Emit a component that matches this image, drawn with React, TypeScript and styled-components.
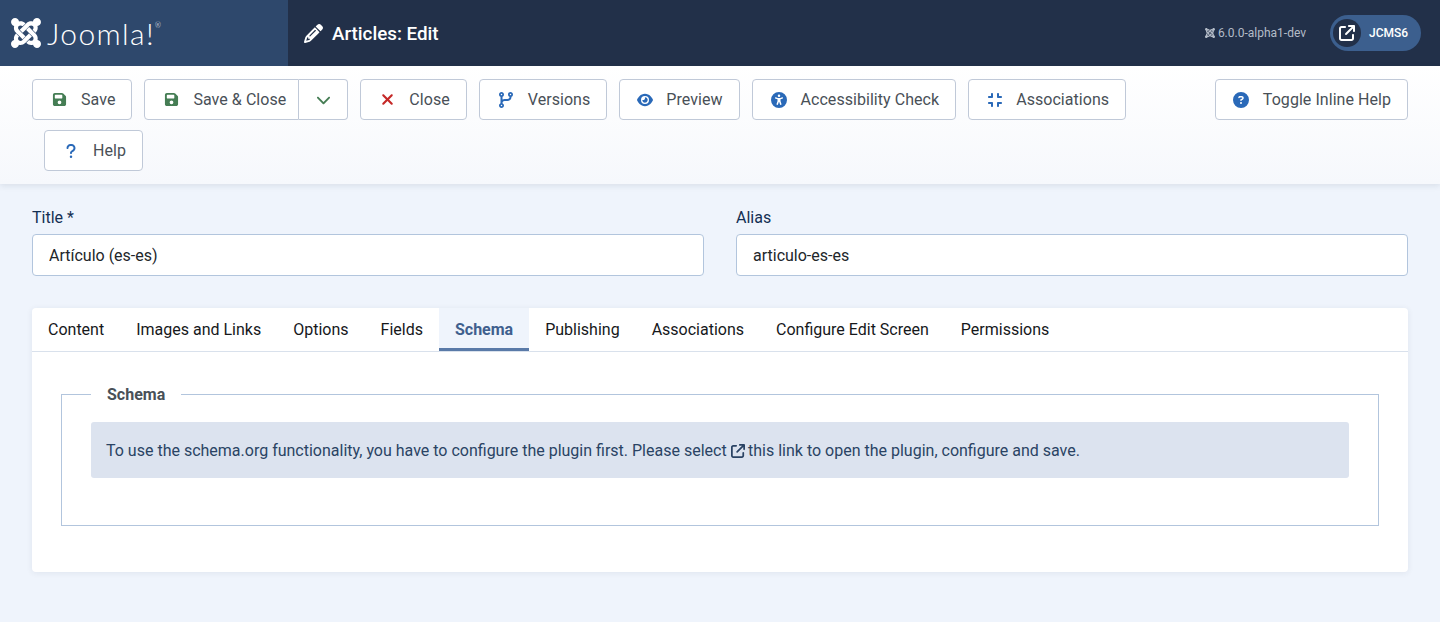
import { ReactNode } from "react";
import styled, { createGlobalStyle } from "styled-components";
import {
  FaArrowUpRightFromSquare,
  FaChevronDown,
  FaCircleQuestion,
  FaCodeBranch,
  FaCompress,
  FaEye,
  FaFloppyDisk,
  FaPencil,
  FaQuestion,
  FaUniversalAccess,
  FaXmark,
} from "react-icons/fa6";
import { SiJoomla } from "react-icons/si";

const tabs = [
  "Content",
  "Images and Links",
  "Options",
  "Fields",
  "Schema",
  "Publishing",
  "Associations",
  "Configure Edit Screen",
  "Permissions",
];

function ToolButton({ icon, color, label, slot = 22 }: { icon: ReactNode; color: string; label: string; slot?: number }) {
  return (
    <Button>
      <IconSlot $color={color} $width={slot}>{icon}</IconSlot>
      <span>{label}</span>
    </Button>
  );
}

export default function App() {
  return (
    <>
      <GlobalStyle />
      <Header>
        <LogoPanel>
          <SiJoomla size={30} color="#fff" />
          <LogoWord>
            Joomla!<LogoMark>®</LogoMark>
          </LogoWord>
        </LogoPanel>
        <PageHeading>
          <FaPencil size={19} color="#fff" />
          <span>Articles: Edit</span>
        </PageHeading>
        <HeaderEnd>
          <Version>
            <SiJoomla size={10} />
            <span>6.0.0-alpha1-dev</span>
          </Version>
          <SitePill>
            <SiteIcon>
              <FaArrowUpRightFromSquare size={16} />
            </SiteIcon>
            <span>JCMS6</span>
          </SitePill>
        </HeaderEnd>
      </Header>

      <Toolbar>
        <ToolButton icon={<FaFloppyDisk size={15} />} color="#457d54" label="Save" />
        <SplitGroup>
          <ToolButton icon={<FaFloppyDisk size={15} />} color="#457d54" label="Save & Close" />
          <CaretButton>
            <FaChevronDown size={15} />
          </CaretButton>
        </SplitGroup>
        <ToolButton icon={<FaXmark size={17} />} color="#c52827" label="Close" />
        <ToolButton icon={<FaCodeBranch size={16} />} color="#2a69b8" label="Versions" />
        <ToolButton icon={<FaEye size={16} />} color="#2a69b8" label="Preview" slot={20} />
        <ToolButton icon={<FaUniversalAccess size={16} />} color="#2a69b8" label="Accessibility Check" />
        <ToolButton icon={<FaCompress size={16} />} color="#2a69b8" label="Associations" slot={21} />
        <HelpToggle>
          <ToolButton icon={<FaCircleQuestion size={16} />} color="#2a69b8" label="Toggle Inline Help" slot={21} />
        </HelpToggle>
        <HelpSlot>
          <ToolButton icon={<FaQuestion size={16} />} color="#2a69b8" label="Help" />
        </HelpSlot>
      </Toolbar>

      <Main>
        <TitleRow>
          <Field>
            <FieldLabel>Title *</FieldLabel>
            <TextInput readOnly value="Artículo (es-es)" />
          </Field>
          <Field>
            <FieldLabel>Alias</FieldLabel>
            <TextInput readOnly value="articulo-es-es" />
          </Field>
        </TitleRow>

        <TabCard>
          <TabBar>
            {tabs.map(tab => (
              <Tab key={tab} $active={tab === "Schema"}>
                {tab}
              </Tab>
            ))}
          </TabBar>
          <SchemaFieldset>
            <SchemaLegend>Schema</SchemaLegend>
            <InfoAlert>
              To use the schema.org functionality, you have to configure the plugin first. Please select{" "}
              <FaArrowUpRightFromSquare size={14} /> this link to open the plugin, configure and save.
            </InfoAlert>
          </SchemaFieldset>
        </TabCard>
      </Main>
    </>
  );
}

const GlobalStyle = createGlobalStyle`
  html, body { margin: 0; padding: 0; }
  body {
    min-height: 622px;
    background: #eff4fc;
    font-family: Roboto, "Liberation Sans", sans-serif;
    font-size: 16px;
    overflow: hidden;
  }
`;

const Header = styled.header`
  display: flex;
  align-items: center;
  height: 66px;
  background: #223049;
`;
const LogoPanel = styled.div`
  display: flex;
  align-items: center;
  gap: 6px;
  width: 288px;
  height: 100%;
  padding-left: 11px;
  box-sizing: border-box;
  background: #2e486c;
`;
const LogoWord = styled.span`
  position: relative;
  color: #fff;
  font-family: Lato, Roboto, sans-serif;
  font-weight: 300;
  font-size: 30px;
  letter-spacing: 1.4px;
`;
const LogoMark = styled.sup`
  position: absolute;
  top: 7px;
  font-size: 7px;
  line-height: 1;
`;
const PageHeading = styled.h1`
  display: flex;
  align-items: center;
  gap: 9px;
  margin: 1px 0 0 16px;
  color: #fff;
  font-size: 18.8px;
  font-weight: 500;
`;
const HeaderEnd = styled.div`
  display: flex;
  align-items: center;
  gap: 24px;
  margin-left: auto;
  margin-right: 19px;
`;
const Version = styled.div`
  display: flex;
  align-items: center;
  gap: 3px;
  color: #b4bcc8;
  font-size: 12px;
`;
const SitePill = styled.div`
  display: flex;
  align-items: center;
  gap: 8px;
  width: 91px;
  height: 36px;
  padding-left: 3px;
  box-sizing: border-box;
  border-radius: 18px;
  background: #3c5f8e;
  color: #fff;
  font-size: 12px;
  font-weight: 500;
`;
const SiteIcon = styled.span`
  display: flex;
  align-items: center;
  justify-content: center;
  width: 28px;
  height: 28px;
  border-radius: 50%;
  background: #223049;
`;

const Toolbar = styled.div`
  display: flex;
  flex-wrap: wrap;
  gap: 10px 12px;
  height: 118px;
  padding: 13px 32px 0;
  box-sizing: border-box;
  background: linear-gradient(#fff, #f6f8fc);
  box-shadow: 0 2px 6px rgba(34, 48, 73, 0.1);
  align-content: flex-start;
`;
const Button = styled.button`
  display: flex;
  align-items: center;
  height: 41px;
  padding: 0 16px 0 15px;
  box-sizing: border-box;
  border: 1px solid #c0c9d8;
  border-radius: 4px;
  background: #fff;
  color: #495057;
  font-family: inherit;
  font-size: 16px;
  letter-spacing: 0.05px;
`;
const IconSlot = styled.span<{ $color: string; $width: number }>`
  display: flex;
  align-items: center;
  justify-content: center;
  width: ${p => p.$width}px;
  margin-right: 11px;
  color: ${p => p.$color};
`;
const SplitGroup = styled.div`
  display: flex;
  & > button:first-child {
    border-top-right-radius: 0;
    border-bottom-right-radius: 0;
    padding-right: 12px;
  }
`;
const CaretButton = styled(Button)`
  width: 49px;
  justify-content: center;
  padding: 0;
  border-left: none;
  border-top-left-radius: 0;
  border-bottom-left-radius: 0;
  color: #457d54;
`;
const HelpToggle = styled.div`
  margin-left: auto;
`;
const HelpSlot = styled.div`
  margin-left: 12px;
`;

const Main = styled.main`
  padding: 24px 32px 0;
`;
const TitleRow = styled.div`
  display: grid;
  grid-template-columns: 1fr 1fr;
  gap: 32px;
`;
const Field = styled.div`
  display: flex;
  flex-direction: column;
`;
const FieldLabel = styled.label`
  height: 26px;
  line-height: 19px;
  color: #132f53;
  font-size: 16px;
`;
const TextInput = styled.input`
  height: 42px;
  padding: 0 16px;
  box-sizing: border-box;
  border: 1px solid #b2c5dd;
  border-radius: 4px;
  background: #fff;
  color: #22262a;
  font-family: inherit;
  font-size: 16px;
  outline: none;
`;
const TabCard = styled.section`
  height: 264px;
  margin-top: 32px;
  border-radius: 4px;
  background: #fff;
  box-shadow: 0 1px 6px rgba(34, 48, 73, 0.08);
  overflow: hidden;
`;
const TabBar = styled.div`
  display: flex;
  height: 44px;
  box-sizing: border-box;
  border-bottom: 1px solid #d9e1ec;
`;
const Tab = styled.div<{ $active?: boolean }>`
  display: flex;
  align-items: center;
  padding: 3px 16px 0;
  height: 43px;
  box-sizing: border-box;
  color: ${p => (p.$active ? "#3f5f8e" : "#16181b")};
  font-size: 16px;
  font-weight: ${p => (p.$active ? 700 : 400)};
  background: ${p => (p.$active ? "#eff4fc" : "transparent")};
  border-bottom: 3px solid ${p => (p.$active ? "#5a7aa8" : "transparent")};
`;
const SchemaFieldset = styled.fieldset`
  margin: 30px 29px 0;
  padding: 16px 29px 47px;
  border: 1px solid #b2c5dd;
`;
const SchemaLegend = styled.legend`
  height: 24px;
  padding: 0 16px;
  line-height: 26px;
  color: #495057;
  font-size: 16px;
  font-weight: 700;
`;
const InfoAlert = styled.div`
  height: 56px;
  padding: 0 15px;
  line-height: 58px;
  border-radius: 3px;
  background: #dce3ef;
  color: #2a4364;
  font-size: 16px;
  svg {
    vertical-align: -2px;
    margin-right: -0.5px;
  }
`;
